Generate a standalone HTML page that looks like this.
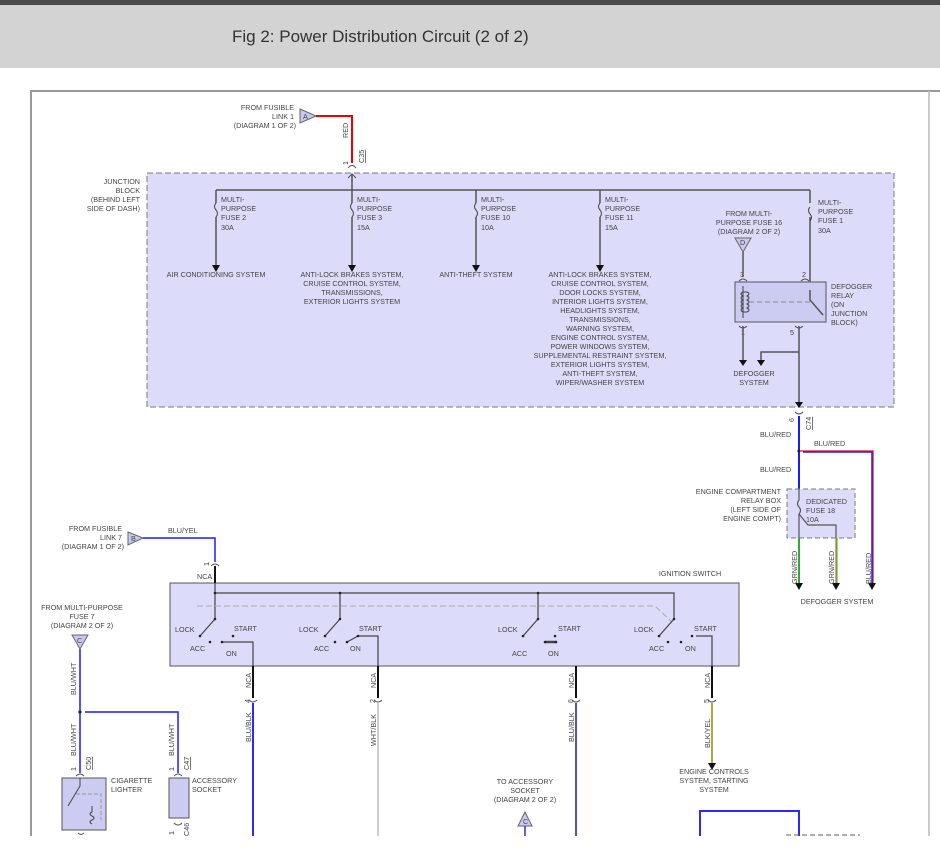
<!DOCTYPE html>
<html><head><style>
body{margin:0;width:940px;height:857px;overflow:hidden;background:#fff;font-family:"Liberation Sans",sans-serif}
.hd{position:absolute;left:0;top:0;width:940px;height:68px;background:#d3d3d3;border-top:5px solid #4a4a4a;box-sizing:border-box}
.hd span{position:absolute;left:232px;top:22px;font-size:17px;color:#333}
svg{position:absolute;left:0;top:0}
text{font-family:"Liberation Sans",sans-serif;font-size:7.2px;fill:#444}
</style></head><body>
<div class="hd"><span>Fig 2: Power Distribution Circuit (2 of 2)</span></div>
<svg width="940" height="857" viewBox="0 0 940 857">
<path d="M31,836 V91 H940" fill="none" stroke="#999" stroke-width="2"/>
<line x1="929" y1="91" x2="929" y2="836" stroke="#bbb" stroke-width="1.5"/>
<rect x="147" y="173" width="747" height="234" fill="#dcdcfa" stroke="#777" stroke-dasharray="6,3"/>
<text x="140" y="184" text-anchor="end">JUNCTION</text><text x="140" y="193" text-anchor="end">BLOCK</text><text x="140" y="202" text-anchor="end">(BEHIND LEFT</text><text x="140" y="211" text-anchor="end">SIDE OF DASH)</text>
<text x="294" y="110" text-anchor="end">FROM FUSIBLE</text><text x="294" y="119" text-anchor="end">LINK 1</text><text x="296" y="128" text-anchor="end">(DIAGRAM 1 OF 2)</text>
<path d="M300,109 L316,116 L300,123z" fill="#c8c8f0" stroke="#666"/><text x="303" y="119" font-size="7">A</text>
<path d="M316,116 H352 V163" fill="none" stroke="#e00" stroke-width="2"/>
<text transform="translate(348,138) rotate(-90)">RED</text>
<text transform="translate(348,165) rotate(-90)">1</text><text transform="translate(364,163) rotate(-90)" style="text-decoration:underline">C35</text>
<path d="M348,168 Q352,163 356,168 M348,178 L352,174 L356,178" fill="none" stroke="#555"/>
<g stroke="#555" stroke-width="1.5" fill="none">
<path d="M216,190 H810 M352,174 V190"/>
<path d="M216,190 V203 M216,217 V268"/>
<path d="M352,190 V203 M352,217 V268"/>
<path d="M476,190 V203 M476,217 V268"/>
<path d="M600,190 V203 M600,217 V268"/>
<path d="M810,190 V203 M810,217 V290"/>
</g>
<g fill="#111"><path d="M212,265 H220 L216,272z M348,265 H356 L352,272z M472,265 H480 L476,272z M596,265 H604 L600,272z"/></g>
<g stroke="#444" fill="none"><path d="M216,203 q-3,3.5 0,7 q3,3.5 0,7 M352,203 q-3,3.5 0,7 q3,3.5 0,7 M476,203 q-3,3.5 0,7 q3,3.5 0,7 M600,203 q-3,3.5 0,7 q3,3.5 0,7 M810,207 q-3,3.5 0,7 q3,3.5 0,7"/></g>
<text x="221" y="202">MULTI-</text><text x="221" y="211">PURPOSE</text><text x="221" y="220">FUSE 2</text><text x="221" y="230">30A</text>
<text x="357" y="202">MULTI-</text><text x="357" y="211">PURPOSE</text><text x="357" y="220">FUSE 3</text><text x="357" y="230">15A</text>
<text x="481" y="202">MULTI-</text><text x="481" y="211">PURPOSE</text><text x="481" y="220">FUSE 10</text><text x="481" y="230">10A</text>
<text x="605" y="202">MULTI-</text><text x="605" y="211">PURPOSE</text><text x="605" y="220">FUSE 11</text><text x="605" y="230">15A</text>
<text x="818" y="205">MULTI-</text><text x="818" y="214">PURPOSE</text><text x="818" y="223">FUSE 1</text><text x="818" y="233">30A</text>
<g text-anchor="middle">
<text x="216" y="277">AIR CONDITIONING SYSTEM</text>
<text x="352" y="277">ANTI-LOCK BRAKES SYSTEM,</text><text x="352" y="286">CRUISE CONTROL SYSTEM,</text><text x="352" y="295">TRANSMISSIONS,</text><text x="352" y="304">EXTERIOR LIGHTS SYSTEM</text>
<text x="476" y="277">ANTI-THEFT SYSTEM</text>
<text x="600" y="277">ANTI-LOCK BRAKES SYSTEM,</text><text x="600" y="286">CRUISE CONTROL SYSTEM,</text><text x="600" y="295">DOOR LOCKS SYSTEM,</text><text x="600" y="304">INTERIOR LIGHTS SYSTEM,</text><text x="600" y="313">HEADLIGHTS SYSTEM,</text><text x="600" y="322">TRANSMISSIONS,</text><text x="600" y="331">WARNING SYSTEM,</text><text x="600" y="340">ENGINE CONTROL SYSTEM,</text><text x="600" y="349">POWER WINDOWS SYSTEM,</text><text x="600" y="358">SUPPLEMENTAL RESTRAINT SYSTEM,</text><text x="600" y="367">EXTERIOR LIGHTS SYSTEM,</text><text x="600" y="376">ANTI-THEFT SYSTEM,</text><text x="600" y="385">WIPER/WASHER SYSTEM</text>
<text x="749" y="216">FROM MULTI-</text><text x="749" y="225">PURPOSE FUSE 16</text><text x="749" y="234">(DIAGRAM 2 OF 2)</text>
<text x="754" y="376">DEFOGGER</text><text x="754" y="385">SYSTEM</text>
</g>
<path d="M735,238 L751,238 L743,252z" fill="#c8c8f0" stroke="#666"/><text x="740" y="245" font-size="6.5">D</text>
<rect x="735" y="282" width="91" height="40" fill="#ccccf2" stroke="#555"/>
<text x="831" y="289">DEFOGGER</text><text x="831" y="298">RELAY</text><text x="831" y="307">(ON</text><text x="831" y="316">JUNCTION</text><text x="831" y="325">BLOCK)</text>
<text x="740" y="277" font-size="7">3</text><text x="802" y="277" font-size="7">2</text><text x="741" y="335" font-size="7">1</text><text x="790" y="335" font-size="7">5</text>
<g stroke="#555" stroke-width="1.5" fill="none">
<path d="M743,252 V277 M743,326 V362"/>
<path d="M810,290 V300 L823,315"/>
<path d="M799,326 V405"/>
<path d="M799,352 H761 V362"/>
</g>
<g fill="#111"><path d="M739,360 H747 L743,366z M757,360 H765 L761,366z M795,402 H803 L799,408z"/></g>
<path d="M739,281 q4,-4 8,0 M801,281 q4,-4 8,0 M739,326 q4,4 8,0 M795,326 q4,4 8,0" stroke="#555" fill="none"/>
<path d="M743,286 V318 M743,292 q-4,2 0,4 q-4,2 0,4 q-4,2 0,4 q-4,2 0,4 q-4,2 0,4 M747,292 q4,2 0,4 q4,2 0,4 q4,2 0,4 q4,2 0,4 q4,2 0,4 M743,292 H747 M743,312 H747" stroke="#444" fill="none"/>
<line x1="749" y1="302" x2="812" y2="302" stroke="#888" stroke-dasharray="5,3"/>
<path d="M795,412 q4,4 8,0" stroke="#555" fill="none"/>
<text transform="translate(794,422) rotate(-90)" font-size="7">6</text><text transform="translate(811,430) rotate(-90)" style="text-decoration:underline">C74</text>
<path d="M799,416 V489" stroke="#1a1aff" stroke-width="2"/>
<path d="M801,451 H873 V583" stroke="#e33" stroke-width="1.5" fill="none"/>
<path d="M803,452 H872 V583" stroke="#1a1aff" stroke-width="1.5" fill="none"/>
<circle cx="799" cy="451" r="1.6" fill="#222"/>
<text x="760" y="437">BLU/RED</text><text x="814" y="446">BLU/RED</text><text x="760" y="472">BLU/RED</text>
<rect x="787" y="489" width="68" height="49" fill="#dcdcfa" stroke="#777" stroke-dasharray="5,3"/>
<g text-anchor="end"><text x="781" y="494">ENGINE COMPARTMENT</text><text x="781" y="503">RELAY BOX</text><text x="781" y="512">(LEFT SIDE OF</text><text x="781" y="521">ENGINE COMPT)</text></g>
<text x="806" y="504">DEDICATED</text><text x="806" y="513">FUSE 18</text><text x="806" y="522">10A</text>
<path d="M799,489 V500 q-3,3.5 0,7 q3,3.5 0,7 V538 M799,514 L808,525 H836 V538" stroke="#555" stroke-width="1.2" fill="none"/>
<path d="M799,538 V583" stroke="#3a3" stroke-width="2"/><path d="M836,538 V583" stroke="#c84" stroke-width="1.5"/><path d="M837,538 V583" stroke="#3a3" stroke-width="1"/>
<path d="M795,583 H803 L799,590z M832,583 H840 L836,590z M868,583 H876 L872,590z" fill="#111"/>
<text transform="translate(797,584) rotate(-90)">GRN/RED</text><text transform="translate(834,584) rotate(-90)">GRN/RED</text><text transform="translate(871,584) rotate(-90)">BLU/RED</text>
<text x="837" y="604" text-anchor="middle">DEFOGGER SYSTEM</text>
<text x="122" y="531" text-anchor="end">FROM FUSIBLE</text><text x="122" y="540" text-anchor="end">LINK 7</text><text x="124" y="549" text-anchor="end">(DIAGRAM 1 OF 2)</text>
<path d="M128,532 L143,538 L128,545z" fill="#c8c8f0" stroke="#666"/><text x="131" y="541" font-size="6">B</text>
<path d="M143,538 H215 V562" stroke="#1a1aff" stroke-width="1.5" fill="none"/>
<text x="168" y="533">BLU/YEL</text>
<text transform="translate(209,566) rotate(-90)" font-size="7">1</text>
<path d="M211,566 q4,-4 8,0" stroke="#555" fill="none"/>
<text x="197" y="579">NCA</text>
<rect x="170" y="583" width="569" height="83" fill="#dcdcfa" stroke="#555"/>
<text x="690" y="576" text-anchor="middle">IGNITION SWITCH</text>
<path d="M215,566 V583" stroke="#111" stroke-width="2"/>
<path d="M215,583 V593 H674 V619 M215,593 V619 M340,593 V619 M538,593 V619" stroke="#444" stroke-width="1.2" fill="none"/>
<path d="M197,606 H655 L672,622" stroke="#aaa" stroke-dasharray="6,3" fill="none"/>
<g stroke="#444" stroke-width="1.2" fill="none">
<path d="M215,619 L200,636 M340,619 L325,636 M538,619 L523,636 M674,619 L659,636"/>
<path d="M222,642 H253 V666 M347,642 L358,636 H378 V666"/><path d="M545,642 H556" stroke-width="2.5"/><path d="M696,636 H712 V666"/>
</g>
<g fill="#222"><circle cx="215" cy="619" r="1.3"/><circle cx="200" cy="636" r="1.3"/><circle cx="210" cy="642" r="1.3"/><circle cx="222" cy="642" r="1.3"/><circle cx="233" cy="636" r="1.3"/>
<circle cx="340" cy="619" r="1.3"/><circle cx="325" cy="636" r="1.3"/><circle cx="335" cy="642" r="1.3"/><circle cx="347" cy="642" r="1.3"/><circle cx="358" cy="636" r="1.3"/>
<circle cx="538" cy="619" r="1.3"/><circle cx="523" cy="636" r="1.3"/><circle cx="545" cy="642" r="1.3"/><circle cx="556" cy="642" r="1.3"/><circle cx="555" cy="636" r="1.3"/>
<circle cx="674" cy="619" r="1.3"/><circle cx="659" cy="636" r="1.3"/><circle cx="668" cy="642" r="1.3"/><circle cx="681" cy="642" r="1.3"/><circle cx="692" cy="636" r="1.3"/>
<circle cx="215" cy="593" r="1.3"/><circle cx="340" cy="593" r="1.3"/><circle cx="538" cy="593" r="1.3"/></g>
<text x="175" y="632">LOCK</text><text x="234" y="631">START</text><text x="190" y="651">ACC</text><text x="226" y="656">ON</text>
<text x="299" y="632">LOCK</text><text x="359" y="631">START</text><text x="314" y="651">ACC</text><text x="350" y="651">ON</text>
<text x="498" y="632">LOCK</text><text x="558" y="631">START</text><text x="512" y="656">ACC</text><text x="548" y="656">ON</text>
<text x="634" y="632">LOCK</text><text x="694" y="631">START</text><text x="649" y="651">ACC</text><text x="685" y="651">ON</text>
<path d="M253,666 V698 M378,666 V698 M576,666 V698 M712,666 V698" stroke="#111" stroke-width="2"/>
<path d="M249,700 q4,4 8,0 M374,700 q4,4 8,0 M572,700 q4,4 8,0 M708,700 q4,4 8,0" stroke="#555" fill="none"/>
<text transform="translate(251,688) rotate(-90)">NCA</text><text transform="translate(376,688) rotate(-90)">NCA</text><text transform="translate(574,688) rotate(-90)">NCA</text><text transform="translate(710,688) rotate(-90)">NCA</text>
<text transform="translate(250,703) rotate(-90)">4</text><text transform="translate(375,703) rotate(-90)">2</text><text transform="translate(573,703) rotate(-90)">6</text><text transform="translate(709,703) rotate(-90)">5</text>
<path d="M253,703 V836" stroke="#2a2aff" stroke-width="2"/>
<path d="M378,703 V836" stroke="#ccc" stroke-width="2"/>
<path d="M576,703 V836" stroke="#1a1a99" stroke-width="1.5"/>
<path d="M712,703 V763" stroke="#aa4" stroke-width="2"/>
<path d="M708,763 H716 L712,770z" fill="#111"/>
<text transform="translate(251,742) rotate(-90)">BLU/BLK</text><text transform="translate(376,746) rotate(-90)">WHT/BLK</text><text transform="translate(574,742) rotate(-90)">BLU/BLK</text><text transform="translate(710,748) rotate(-90)">BLK/YEL</text>
<g text-anchor="middle"><text x="714" y="774">ENGINE CONTROLS</text><text x="714" y="783">SYSTEM, STARTING</text><text x="714" y="792">SYSTEM</text>
<text x="525" y="784">TO ACCESSORY</text><text x="525" y="793">SOCKET</text><text x="525" y="802">(DIAGRAM 2 OF 2)</text>
<text x="82" y="610">FROM MULTI-PURPOSE</text><text x="82" y="619">FUSE 7</text><text x="82" y="628">(DIAGRAM 2 OF 2)</text></g>
<path d="M518,826 L525,812 L532,826z" fill="#c8c8f0" stroke="#666"/><text x="523" y="824" font-size="6">C</text>
<path d="M525,826 V836" stroke="#2a2aff" stroke-width="1.5"/>
<path d="M700,836 V811 H799 V836" stroke="#2a2aff" stroke-width="2" fill="none"/>
<path d="M786,835 H860" stroke="#666" stroke-dasharray="5,3"/>
<path d="M72,635 L88,635 L80,649z" fill="#c8c8f0" stroke="#666"/><text x="77" y="643" font-size="6">C</text>
<path d="M80,649 V773 M85,712 H178 V773" stroke="#1a1aff" stroke-width="1.5" fill="none"/>
<circle cx="80" cy="712" r="1.6" fill="#222"/>
<text transform="translate(76,695) rotate(-90)">BLU/WHT</text><text transform="translate(76,756) rotate(-90)">BLU/WHT</text><text transform="translate(174,756) rotate(-90)">BLU/WHT</text>
<text transform="translate(76,771) rotate(-90)">1</text><text transform="translate(91,770) rotate(-90)" style="text-decoration:underline">C50</text>
<text transform="translate(174,771) rotate(-90)">1</text><text transform="translate(189,770) rotate(-90)" style="text-decoration:underline">C47</text>
<path d="M76,776 q4,-4 8,0 M174,776 q4,-4 8,0" stroke="#555" fill="none"/>
<rect x="62" y="778" width="44" height="52" fill="#ccccf2" stroke="#555"/>
<rect x="169" y="778" width="20" height="40" fill="#ccccf2" stroke="#555"/>
<path d="M80,778 V786 L68,806 M92,806 V812 q-4,2 0,4 q4,2 0,4 q-4,2 0,4" stroke="#444" fill="none"/>
<path d="M76,794 H101 V820" stroke="#999" stroke-dasharray="4,2" fill="none"/>
<text x="111" y="783">CIGARETTE</text><text x="111" y="792">LIGHTER</text>
<text x="192" y="783">ACCESSORY</text><text x="192" y="792">SOCKET</text>
<path d="M174,823 q4,4 8,0 M78,833 q3,3 6,0" stroke="#555" fill="none"/>
<text transform="translate(174,835) rotate(-90)">1</text><text transform="translate(189,836) rotate(-90)">C46</text>
</svg>
</body></html>
